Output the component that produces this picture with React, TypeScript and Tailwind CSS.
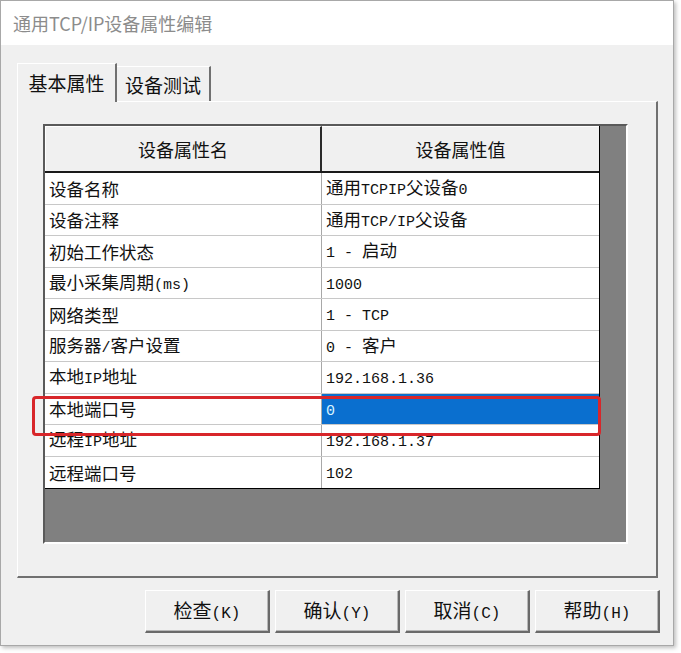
import React from 'react';

const CJK = /[\u3000-\u303f\u4e00-\u9fff\uff00-\uffef]/;

// Split text into CJK runs and half-width Latin runs (SimSun-like look)
function Mixed({ text, latin = 'text-[15px]' }: { text: string; latin?: string }) {
  const parts = text.match(/[\u3000-\u303f\u4e00-\u9fff\uff00-\uffef]+|[^\u3000-\u303f\u4e00-\u9fff\uff00-\uffef]+/g) ?? [];
  return (
    <span className="whitespace-pre">
      {parts.map((p, i) =>
        CJK.test(p) ? (
          <span key={i} className="font-['Noto_Sans_CJK_SC',sans-serif]">
            {p}
          </span>
        ) : (
          <span key={i} className={`font-['Liberation_Mono',monospace] ${latin}`}>
            {p}
          </span>
        ),
      )}
    </span>
  );
}

const rows: [string, string][] = [
  ['设备名称', '通用TCPIP父设备0'],
  ['设备注释', '通用TCP/IP父设备'],
  ['初始工作状态', '1 - 启动'],
  ['最小采集周期(ms)', '1000'],
  ['网络类型', '1 - TCP'],
  ['服务器/客户设置', '0 - 客户'],
  ['本地IP地址', '192.168.1.36'],
  ['本地端口号', '0'],
  ['远程IP地址', '192.168.1.37'],
  ['远程端口号', '102'],
];

const buttons = ['检查(K)', '确认(Y)', '取消(C)', '帮助(H)'];

export default function App() {
  return (
    <div className="relative w-[681px] h-[653px] bg-white text-[#111] font-['Noto_Sans_CJK_SC',sans-serif]">
      <div className="w-[674px] h-[646px] flex flex-col border border-[#a8a8a8] shadow-[2px_2px_4px_rgba(0,0,0,0.25)]">
        {/* Title bar */}
        <div className="h-[44px] bg-white flex items-center pl-[12px] text-[18px] text-[#8c8c8c] leading-none">
          通用TCP/IP设备属性编辑
        </div>

        <div className="flex-1 bg-[#f0f0f0] pl-[16px] pt-[17px] flex flex-col">
          {/* Tabs */}
          <div className="flex items-end h-[39px]">
            <div className="h-[39px] w-[100px] border-t border-l border-white border-r-2 border-r-[#707070] flex items-center justify-center text-[19px] leading-none pb-[2px] bg-[#f0f0f0] relative z-10 -mb-px">
              基本属性
            </div>
            <div className="h-[35px] w-[94px] border-t border-white border-r-2 border-r-[#707070] flex items-center justify-center text-[19px] leading-none">
              设备测试
            </div>
          </div>

          {/* Tab panel */}
          <div className="w-[641px] h-[477px] border-t border-l border-white border-r-2 border-b-2 border-r-[#707070] border-b-[#707070] pl-[25px] pt-[22px]">
            <div className="w-[585px] h-[420px] bg-[#808080] border-2 border-t-[#5a5a5a] border-l-[#5a5a5a] border-r-white border-b-white">
              <div className="w-[555px] border-r border-b border-black bg-white">
                {/* Header */}
                <div className="flex h-[47px] bg-[#f0f0f0] border-b-2 border-[#1a1a1a] text-[18px] leading-none">
                  <div className="w-[277px] flex items-center justify-center border-r-2 border-[#2a2a2a] border-t border-l border-t-white border-l-white">
                    设备属性名
                  </div>
                  <div className="flex-1 flex items-center justify-center border-t border-t-white">
                    设备属性值
                  </div>
                </div>
                {/* Rows */}
                {rows.map(([k, v], i) => {
                  const sel = i === 7;
                  return (
                    <div key={k} className={`flex h-[31.5px] text-[17.5px] leading-none ${i < rows.length - 1 ? 'border-b border-[#c8c8c8]' : ''}`}>
                      <div className="w-[277px] flex items-center pl-[4px] border-r border-[#a8a8a8]">
                        <Mixed text={k} latin="text-[15px]" />
                      </div>
                      <div className={`flex-1 flex items-center pl-[4px] ${sel ? 'bg-[#0a6fcf] text-[#d8f4ff]' : ''}`}>
                        <Mixed text={v} latin="text-[15px]" />
                      </div>
                    </div>
                  );
                })}
              </div>
            </div>
          </div>

          {/* Buttons */}
          <div className="flex gap-[5px] pl-[128px] pt-[12px]">
            {buttons.map((b) => (
              <div
                key={b}
                className="w-[125px] h-[43px] bg-[#f0f0f0] border-t border-l border-white border-r-2 border-b-2 border-r-[#6a6a6a] border-b-[#6a6a6a] shadow-[inset_-1px_-1px_0_#b8b8b8] flex items-center justify-center text-[19px] leading-none"
              >
                <Mixed text={b} latin="text-[16px]" />
              </div>
            ))}
          </div>
        </div>
      </div>

      {/* Red annotation around the selected row */}
      <div className="absolute left-[32px] top-[396px] w-[569px] h-[40px] border-[3px] border-[#d8262a] rounded-[4px]" />
    </div>
  );
}
